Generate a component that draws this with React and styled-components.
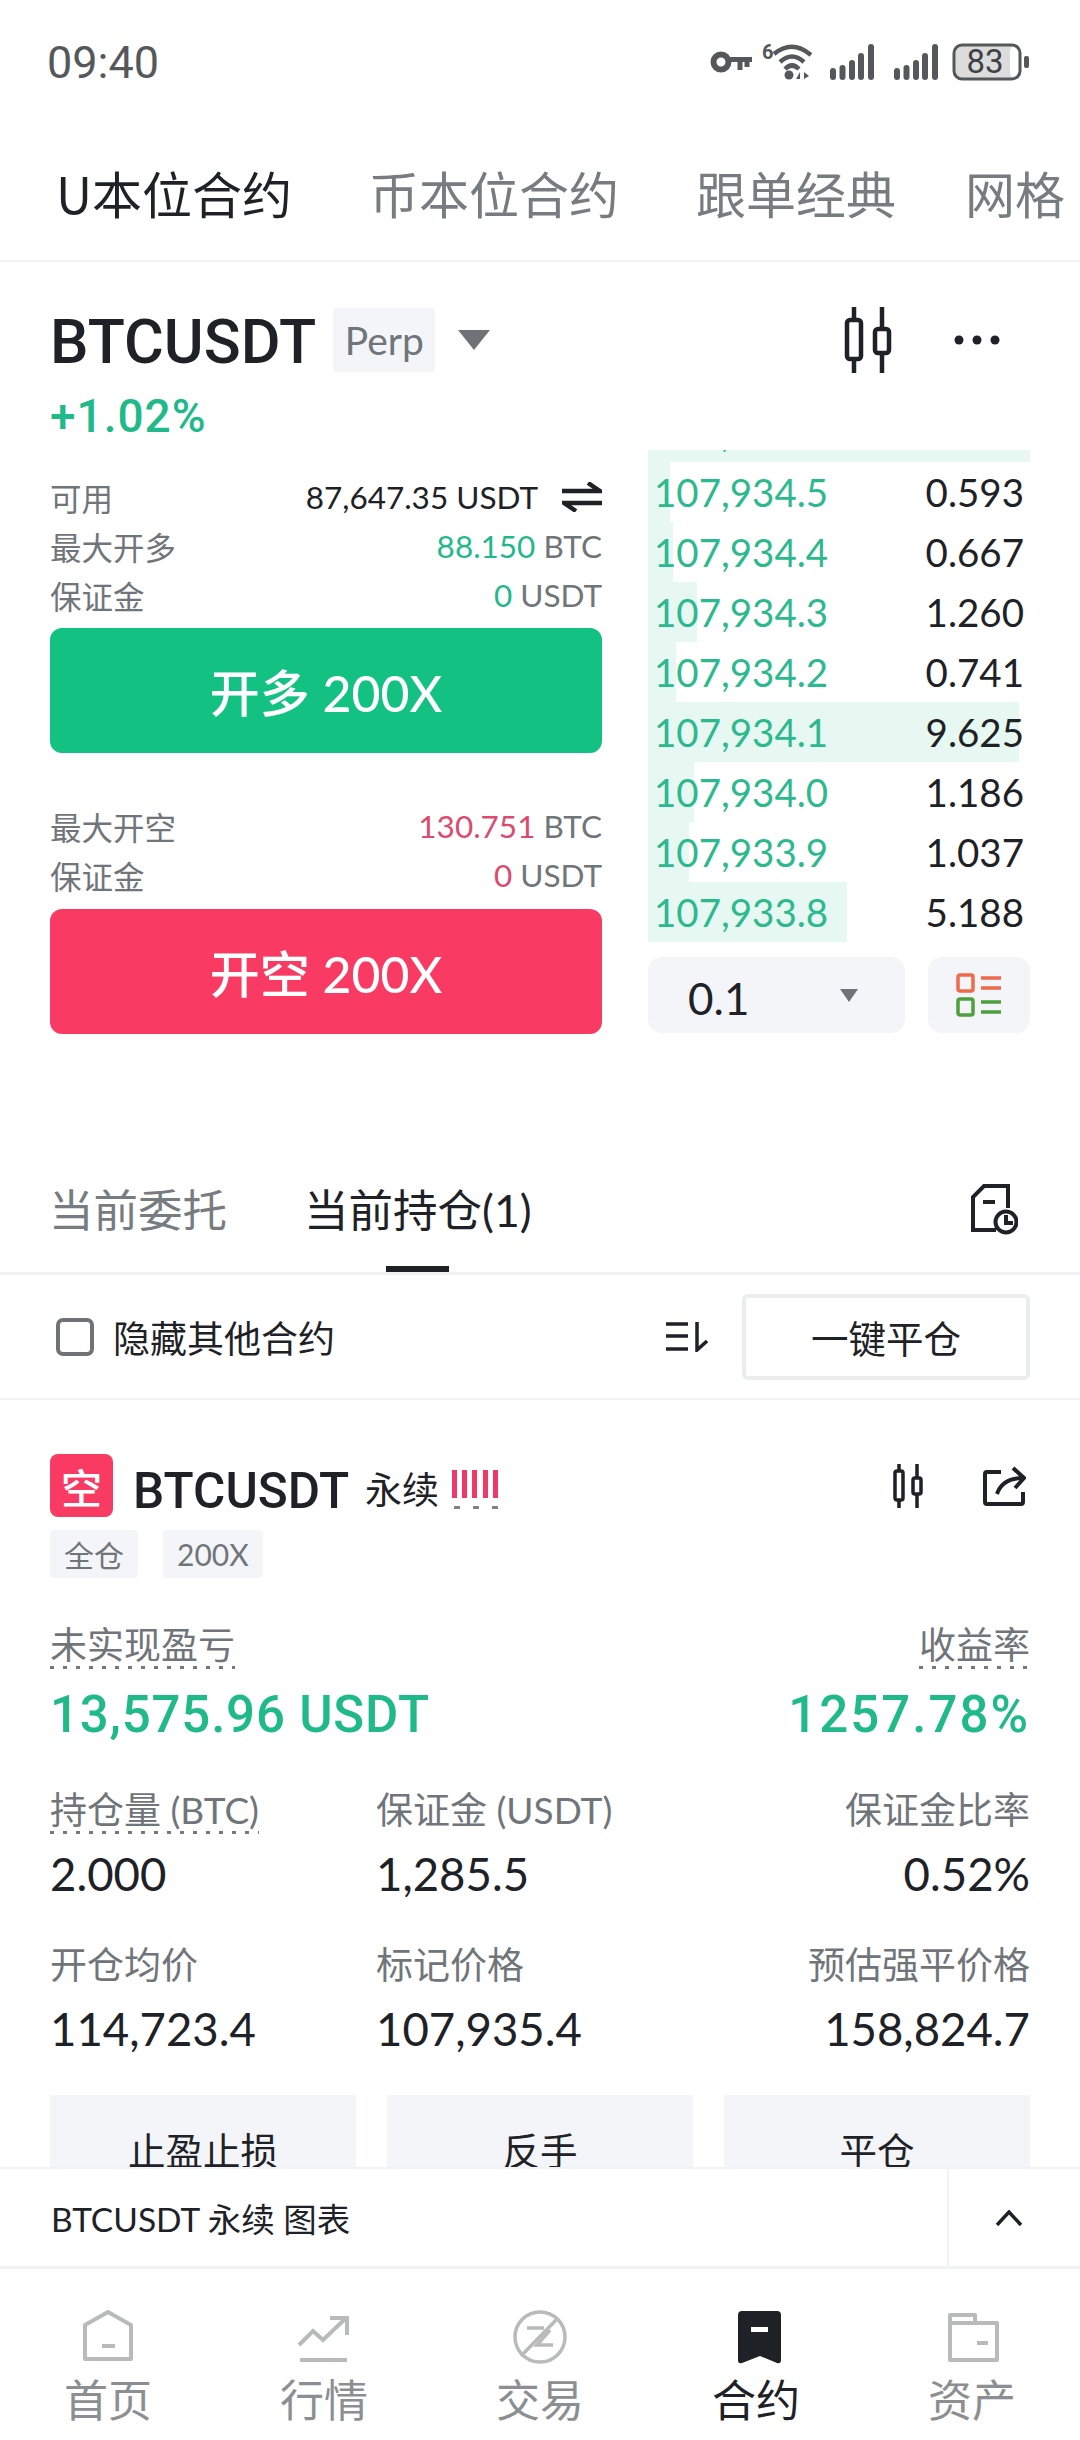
import React from 'react'
import styled, { createGlobalStyle } from 'styled-components'

const ink = '#1e2226'
const grey = '#70757a'
const green = '#1fb98a'
const red = '#dc4a6e'
const soft = '#f3f5f8'
const line = '#f1f2f4'

const GlobalStyle = createGlobalStyle`
  html, body {
    margin: 0;
    padding: 0;
    background: #fff;
  }
  body {
    font-family: Lato, "Noto Sans CJK SC", sans-serif;
    color: ${ink};
  }
`

const Page = styled.div`
  width: 1080px;
  height: 2440px;
  display: flex;
  flex-direction: column;
  overflow: hidden;
  background: #fff;
`

const StatusBar = styled.div`
  height: 124px;
  flex: none;
  display: flex;
  align-items: center;
  padding: 0 51px 0 47px;
  color: #55585a;
`

const Time = styled.span`
  font-family: Roboto, sans-serif;
  font-size: 45px;
  margin-right: auto;
`

const StatusIcon = styled.svg`
  display: block;
  flex: none;
  margin-left: ${props => props.$gap}px;
`

const TopTabs = styled.div`
  height: 136px;
  flex: none;
  display: flex;
  align-items: center;
  gap: 77px;
  padding-left: 56px;
  white-space: nowrap;
  overflow: hidden;
  border-bottom: 2px solid ${line};
`

const TopTab = styled.span`
  font-size: 50px;
  line-height: 60px;
  font-family: "Noto Sans CJK SC", sans-serif;
  margin-left: ${props => props.$shift || 0}px;
  color: ${props => (props.$active ? ink : '#777c80')};
`

const Scroller = styled.div`
  flex: 1;
  min-height: 0;
  overflow: hidden;
`

const Header = styled.div`
  display: flex;
  align-items: center;
  height: 64px;
  padding: 46px 80px 0 50px;
`

const Symbol = styled.span`
  margin-top: 4px;
  font-family: Roboto, sans-serif;
  font-weight: 500;
  font-size: 61px;
  line-height: 64px;
`

const PerpChip = styled.span`
  width: 102px;
  height: 64px;
  margin-left: 17px;
  display: flex;
  align-items: center;
  justify-content: center;
  background: ${soft};
  border-radius: 4px;
  color: ${grey};
  font-size: 39px;
`

const Caret = styled.i`
  display: block;
  border-style: solid;
  border-width: ${props => props.$h}px ${props => props.$w / 2}px 0;
  border-color: #6f7377 transparent transparent;
`

const HeaderCaret = styled(Caret)`
  margin: 0 auto 0 23px;
`

const HeaderActions = styled.div`
  display: flex;
  align-items: center;
  gap: 62px;
`

const Change = styled.div`
  margin: 19px 0 9px 50px;
  color: ${green};
  font-family: Roboto, sans-serif;
  font-weight: 500;
  font-size: 46px;
  letter-spacing: 1px;
  line-height: 50px;
`

const Trade = styled.div`
  display: grid;
  grid-template-columns: 552px 382px;
  column-gap: 46px;
  padding-left: 50px;
`

const OrderForm = styled.div`
  padding-top: 23px;
`

const SecondGroup = styled.div`
  margin-top: 49px;
`

const FormRow = styled.div`
  height: 47px;
  padding-bottom: 2px;
  display: flex;
  align-items: center;
  justify-content: space-between;
  font-size: 31.5px;
  color: ${grey};
`

const Value = styled.span`
  display: flex;
  align-items: center;
`

const SwapIcon = styled.svg`
  margin-left: 24px;
`

const Tone = styled.span`
  color: ${props => props.$color};
`

const TradeButton = styled.div`
  height: 125px;
  margin-top: ${props => props.$top}px;
  padding-bottom: 2px;
  box-sizing: border-box;
  display: flex;
  align-items: center;
  justify-content: center;
  border-radius: 12px;
  background: ${props => props.$color};
  color: #fff;
  font-size: 50px;
  font-weight: 500;
`

const Book = styled.div`
  overflow: hidden;
`

const BookRow = styled.div`
  height: 60px;
  display: flex;
  align-items: center;
  justify-content: space-between;
  padding: 0 6px 0 6px;
  font-size: 38.5px;
  line-height: 60px;
`

const ClippedRow = styled(BookRow)`
  margin-top: -48px;
  background: #e6f8f1;
`

const Price = styled.span`
  position: relative;
  color: #2cb98e;
`

const BookControls = styled.div`
  display: flex;
  justify-content: space-between;
  margin-top: 15px;
`

const Precision = styled.div`
  width: 257px;
  height: 76px;
  box-sizing: border-box;
  padding: 0 47px 0 40px;
  display: flex;
  align-items: center;
  justify-content: space-between;
  background: ${soft};
  border-radius: 14px;
  font-size: 44px;
`

const PrecisionValue = styled.span`
  margin-top: 6px;
`

const LayoutButton = styled.div`
  width: 102px;
  height: 76px;
  display: flex;
  align-items: center;
  justify-content: center;
  background: ${soft};
  border-radius: 14px;
`

const PositionTabs = styled.div`
  margin-top: 107px;
  height: 92px;
  display: flex;
  gap: 77px;
  padding: 39px 62px 0 49px;
  border-bottom: 3px solid ${line};
`

const PositionTab = styled.span`
  position: relative;
  height: 92px;
  font-size: 44.5px;
  line-height: 60px;
  color: ${props => (props.$active ? ink : '#777c80')};
  &::after {
    content: '';
    display: ${props => (props.$active ? 'block' : 'none')};
    position: absolute;
    left: 50%;
    bottom: 0;
    width: 63px;
    height: 6px;
    margin-left: -32px;
    background: ${ink};
  }
`

const HistoryIcon = styled.svg`
  margin: 4px 0 0 auto;
`

const FilterRow = styled.div`
  height: 123px;
  display: flex;
  align-items: center;
  padding: 0 50px 0 56px;
  border-bottom: 2px solid ${line};
`

const Checkbox = styled.i`
  display: block;
  width: 38px;
  height: 38px;
  box-sizing: border-box;
  border: 4px solid #6f7377;
  border-radius: 7px;
`

const FilterLabel = styled.span`
  margin: 0 auto 0 19px;
  font-size: 37px;
  color: ${ink};
`

const CloseAll = styled.div`
  width: 288px;
  height: 86px;
  margin-left: 34px;
  box-sizing: border-box;
  display: flex;
  align-items: center;
  justify-content: center;
  border: 4px solid #eaecee;
  border-radius: 6px;
  font-size: 37.5px;
`

const Card = styled.div`
  padding: 54px 50px 0 50px;
`

const CardTitle = styled.div`
  height: 63px;
  display: flex;
  align-items: center;
`

const SideBadge = styled.span`
  width: 63px;
  height: 63px;
  display: flex;
  align-items: center;
  justify-content: center;
  background: #f93b63;
  border-radius: 8px;
  color: #fff;
  font-size: 41px;
  font-weight: 500;
`

const CardSymbol = styled.span`
  margin: 10px 0 0 20px;
  font-family: Roboto, sans-serif;
  font-weight: 500;
  font-size: 49.5px;
`

const Perpetual = styled.span`
  margin: 4px 0 0 16px;
  font-size: 37px;
`

const LeverageBars = styled.svg`
  margin: 8px auto 0 13px;
`

const CardActions = styled.div`
  display: flex;
  align-items: center;
  gap: 60px;
  margin-right: 4px;
`

const Chips = styled.div`
  display: flex;
  gap: 25px;
  margin-top: 13px;
`

const Chip = styled.span`
  height: 48px;
  padding: 0 14px;
  display: flex;
  align-items: center;
  background: ${soft};
  border-radius: 4px;
  color: ${grey};
  font-size: 30px;
`

const PnlRow = styled.div`
  display: flex;
  justify-content: space-between;
  margin-top: ${props => props.$top}px;
`

const PnlColumn = styled.div`
  display: flex;
  flex-direction: column;
  align-items: ${props => (props.$right ? 'flex-end' : 'flex-start')};
`

const Label = styled.span`
  display: inline-block;
  height: 42px;
  padding-bottom: 3px;
  line-height: 42px;
  font-size: 37px;
  color: ${grey};
  white-space: nowrap;
  background: ${props =>
    props.$hint
      ? `repeating-linear-gradient(to right, #777 0 4px, transparent 4px 13px) left bottom / 100% 3px no-repeat`
      : 'none'};
`

const Pnl = styled.span`
  margin-top: 16px;
  font-family: Roboto, sans-serif;
  font-weight: 500;
  font-size: 51px;
  letter-spacing: ${props => props.$spacing}px;
  line-height: 60px;
  color: ${green};
`

const Metrics = styled.div`
  display: grid;
  grid-template-columns: 326px 1fr 1fr;
  margin-top: ${props => props.$top}px;
`

const Metric = styled.div`
  display: flex;
  flex-direction: column;
  align-items: ${props => (props.$right ? 'flex-end' : 'flex-start')};
`

const MetricValue = styled.span`
  margin-top: 12px;
  font-size: 45.5px;
  line-height: 56px;
`

const CardButtons = styled.div`
  display: grid;
  grid-template-columns: repeat(3, 1fr);
  column-gap: 31px;
  margin-top: 38px;
`

const CardButton = styled.div`
  height: 106px;
  padding-bottom: 10px;
  display: flex;
  align-items: center;
  justify-content: center;
  background: ${soft};
  font-size: 37.5px;
`

const ChartBar = styled.div`
  height: 97px;
  flex: none;
  display: flex;
  align-items: center;
  padding-left: 51px;
  font-size: 33.5px;
  background: #fff;
  border-top: 2px solid ${line};
  border-bottom: 3px solid ${line};
`

const ChartToggle = styled.div`
  width: 133px;
  height: 100%;
  box-sizing: border-box;
  padding-right: 12px;
  margin-left: auto;
  display: flex;
  align-items: center;
  justify-content: center;
  border-left: 2px solid ${line};
`

const BottomNav = styled.nav`
  height: 171px;
  flex: none;
  display: grid;
  grid-template-columns: repeat(5, 1fr);
  padding-top: 41px;
  box-sizing: border-box;
`

const NavItem = styled.div`
  display: flex;
  flex-direction: column;
  align-items: center;
  color: ${props => (props.$active ? ink : '#8c8f91')};
  font-size: 44px;
  line-height: 50px;
`

const NavIcon = styled.svg`
  display: block;
  margin-bottom: 11px;
`

const bookRows = [
  ['107,934.5', '0.593', 22],
  ['107,934.4', '0.667', 25],
  ['107,934.3', '1.260', 49],
  ['107,934.2', '0.741', 28],
  ['107,934.1', '9.625', 371],
  ['107,934.0', '1.186', 46],
  ['107,933.9', '1.037', 41],
  ['107,933.8', '5.188', 199],
]

const tabs = [
  { label: '首页', icon: HomeGlyph },
  { label: '行情', icon: MarketGlyph },
  { label: '交易', icon: TradeGlyph },
  { label: '合约', icon: FuturesGlyph, active: true },
  { label: '资产', icon: AssetsGlyph },
]

function HomeGlyph() {
  return (
    <g fill="none" stroke="#b8babb" strokeWidth="4" strokeLinejoin="round">
      <path d="M22 2 L45 15 V49 H-1 V15 Z" transform="translate(5 0)" />
      <path d="M21 36 H34" />
    </g>
  )
}

function MarketGlyph() {
  return (
    <g fill="none" stroke="#b8babb" strokeWidth="4">
      <path d="M2 35 L16 21 L26 30 L49 8" />
      <path d="M33 8 H50 V25" />
      <path d="M3 50 H50" />
    </g>
  )
}

function TradeGlyph() {
  return (
    <g fill="none" stroke="#b8babb" strokeWidth="3.5">
      <circle cx="27" cy="27" r="25" />
      <path d="M8 46 L45 8" />
      <path d="M14 18 H31" />
      <path d="M37 20 L24 35 H40" />
    </g>
  )
}

function FuturesGlyph() {
  return (
    <g>
      <path d="M9 1 H48 Q52 1 52 5 V50 Q52 54 48 53 L31 46 L13 53 Q9 54 9 50 V5 Q9 1 13 1 Z" fill={ink} />
      <rect x="22" y="17" width="17" height="5" fill="#fff" />
    </g>
  )
}

function AssetsGlyph() {
  return (
    <g fill="none" stroke="#b8babb" strokeWidth="4" strokeLinejoin="round">
      <path d="M5 5 H30 V13 H52 V50 H5 Z" />
      <path d="M5 13 H30" />
      <path d="M32 33 H43" />
    </g>
  )
}

const Candles = () => (
  <svg width="48" height="66" viewBox="0 0 48 66" fill="none" stroke={ink} strokeWidth="4.5">
    <path d="M10 0 V13 M10 52 V66 M38 0 V20 M38 46 V66" />
    <rect x="3" y="13" width="14" height="39" rx="3" />
    <rect x="31" y="22" width="14" height="24" rx="3" />
  </svg>
)

const Signal = ({ gap }) => (
  <StatusIcon $gap={gap} width="44" height="36" viewBox="0 0 44 36" fill="#55585a">
    <rect x="0" y="24" width="6" height="12" rx="3" />
    <rect x="9.5" y="21" width="6" height="15" rx="3" />
    <rect x="19" y="16" width="6" height="20" rx="3" />
    <rect x="28" y="9" width="6" height="27" rx="3" />
    <rect x="38" y="0" width="6" height="36" rx="3" />
  </StatusIcon>
)

export default function App() {
  return (
    <Page>
      <GlobalStyle />
      <StatusBar>
        <Time>09:40</Time>
        <StatusIcon $gap={0} width="42" height="24" viewBox="0 0 42 24" fill="none" stroke="#55585a">
          <circle cx="11" cy="12" r="7.5" strokeWidth="6" />
          <path d="M19 9.5 H42 M30 10 V20 M37 10 V17" strokeWidth="5" />
        </StatusIcon>
        <StatusIcon $gap={10} width="50" height="36" viewBox="0 0 50 36" fill="none" stroke="#55585a">
          <text x="0" y="15" fontFamily="Roboto, sans-serif" fontWeight="700" fontSize="20" fill="#55585a" stroke="none">6</text>
          <path d="M12 10 Q30 -5 49 11 M18 18 Q30 7 42 18 M23 25 Q30 18 37 25" strokeWidth="4.5" />
          <circle cx="27" cy="31" r="4.5" fill="#55585a" stroke="none" />
          <path d="M34 35 L38 28 V35 Z M42 28 L47 32 L42 35 Z" fill="#55585a" stroke="none" />
        </StatusIcon>
        <Signal gap={18} />
        <Signal gap={20} />
        <StatusIcon $gap={14} width="77" height="38" viewBox="0 0 77 38">
          <rect x="2" y="2" width="66" height="34" rx="8" fill="#dcdcdc" />
          <rect x="58" y="3" width="9" height="32" rx="6" fill="#fff" />
          <rect x="2" y="2" width="66" height="34" rx="8" fill="none" stroke="#55585a" strokeWidth="3" />
          <rect x="72" y="13" width="5" height="12" rx="2" fill="#55585a" />
          <text x="33" y="30" textAnchor="middle" fontFamily="Roboto, sans-serif" fontSize="33" fill="#3f4244">83</text>
        </StatusIcon>
      </StatusBar>

      <TopTabs>
        <TopTab $active>U本位合约</TopTab>
        <TopTab>币本位合约</TopTab>
        <TopTab>跟单经典</TopTab>
        <TopTab $shift={-8}>网格</TopTab>
      </TopTabs>

      <Scroller>
        <Header>
          <Symbol>BTCUSDT</Symbol>
          <PerpChip>Perp</PerpChip>
          <HeaderCaret $w={32} $h={20} />
          <HeaderActions>
            <Candles />
            <svg width="46" height="10" viewBox="0 0 46 10" fill={ink}>
              <circle cx="5" cy="5" r="4.5" />
              <circle cx="23" cy="5" r="4.5" />
              <circle cx="41" cy="5" r="4.5" />
            </svg>
          </HeaderActions>
        </Header>
        <Change>+1.02%</Change>

        <Trade>
          <OrderForm>
            <FormRow>
              <span>可用</span>
              <Value>
                <Tone $color={ink}>87,647.35 USDT</Tone>
                <SwapIcon width="40" height="30" viewBox="0 0 40 30" fill="none" stroke={ink} strokeWidth="4.5">
                  <path d="M0 9 H38 L26 1" />
                  <path d="M40 21 H2 L14 29" />
                </SwapIcon>
              </Value>
            </FormRow>
            <FormRow>
              <span>最大开多</span>
              <span><Tone $color={green}>88.150</Tone> BTC</span>
            </FormRow>
            <FormRow>
              <span>保证金</span>
              <span><Tone $color={green}>0</Tone> USDT</span>
            </FormRow>
            <TradeButton $color="#13c283" $top={8}>开多 200X</TradeButton>
            <SecondGroup>
              <FormRow>
                <span>最大开空</span>
                <span><Tone $color={red}>130.751</Tone> BTC</span>
              </FormRow>
              <FormRow>
                <span>保证金</span>
                <span><Tone $color={red}>0</Tone> USDT</span>
              </FormRow>
              <TradeButton $color="#f93b63" $top={9}>开空 200X</TradeButton>
            </SecondGroup>
          </OrderForm>

          <div>
            <Book>
              <ClippedRow>
                <Price>107,934.6</Price>
              </ClippedRow>
              {bookRows.map(([price, size, depth]) => (
                <BookRow
                  key={price}
                  style={{ background: `linear-gradient(to right, #e6f8f1 ${depth}px, #fff ${depth}px)` }}
                >
                  <Price>{price}</Price>
                  <span>{size}</span>
                </BookRow>
              ))}
            </Book>
            <BookControls>
              <Precision>
                <PrecisionValue>0.1</PrecisionValue>
                <Caret $w={19} $h={13} />
              </Precision>
              <LayoutButton>
                <svg width="46" height="44" viewBox="0 0 46 44" fill="none" strokeWidth="3.5">
                  <g stroke="#ef6a4a">
                    <rect x="2" y="2" width="15" height="16" rx="2" />
                    <path d="M25 5 H45 M25 15 H45" />
                  </g>
                  <g stroke="#4ea03c">
                    <rect x="2" y="26" width="15" height="16" rx="2" />
                    <path d="M25 29 H45 M25 39 H45" />
                  </g>
                </svg>
              </LayoutButton>
            </BookControls>
          </div>
        </Trade>

        <PositionTabs>
          <PositionTab>当前委托</PositionTab>
          <PositionTab $active>当前持仓(1)</PositionTab>
          <HistoryIcon width="48" height="52" viewBox="0 0 48 52" fill="none" stroke={ink} strokeWidth="4">
            <path d="M26 46 H3 V13 L14 2 H38 V24" />
            <path d="M13 18 H25" />
            <circle cx="36" cy="38" r="10.5" />
            <path d="M36 31 V39 H43" />
          </HistoryIcon>
        </PositionTabs>

        <FilterRow>
          <Checkbox />
          <FilterLabel>隐藏其他合约</FilterLabel>
          <svg width="42" height="30" viewBox="0 0 42 30" fill="none" stroke={ink} strokeWidth="3.5">
            <path d="M0 2 H22 M0 14 H22 M0 27 H22" />
            <path d="M31 0 V28 L41 19" />
          </svg>
          <CloseAll>一键平仓</CloseAll>
        </FilterRow>

        <Card>
          <CardTitle>
            <SideBadge>空</SideBadge>
            <CardSymbol>BTCUSDT</CardSymbol>
            <Perpetual>永续</Perpetual>
            <LeverageBars width="46" height="40" viewBox="0 0 46 40">
              <g fill="#f0386a">
                <rect x="0" y="0" width="5" height="28" />
                <rect x="10" y="0" width="5" height="28" />
                <rect x="20" y="0" width="5" height="28" />
                <rect x="31" y="0" width="5" height="28" />
                <rect x="41" y="0" width="5" height="28" />
              </g>
              <g fill="#808487">
                <rect x="2" y="36" width="6" height="3" />
                <rect x="21" y="36" width="6" height="3" />
                <rect x="40" y="36" width="6" height="3" />
              </g>
            </LeverageBars>
            <CardActions>
              <svg width="30" height="44" viewBox="0 0 30 44" fill="none" stroke={ink} strokeWidth="3.5">
                <path d="M6 0 V7 M6 36 V44 M24 0 V14 M24 30 V44" />
                <rect x="2" y="7" width="8" height="29" rx="2" />
                <rect x="20" y="14" width="8" height="16" rx="2" />
              </svg>
              <svg width="43" height="40" viewBox="0 0 43 40" fill="none" stroke={ink} strokeWidth="4">
                <path d="M18 6 H4 Q2 6 2 8 V36 Q2 38 4 38 H38 Q40 38 40 36 V26" />
                <path d="M14 28 Q19 13 38 12" />
                <path d="M30 2 L41 12 L32 22" />
              </svg>
            </CardActions>
          </CardTitle>
          <Chips>
            <Chip>全仓</Chip>
            <Chip>200X</Chip>
          </Chips>

          <PnlRow $top={46}>
            <PnlColumn>
              <Label $hint>未实现盈亏</Label>
              <Pnl $spacing={0.8}>13,575.96 USDT</Pnl>
            </PnlColumn>
            <PnlColumn $right>
              <Label $hint>收益率</Label>
              <Pnl $spacing={2}>1257.78%</Pnl>
            </PnlColumn>
          </PnlRow>

          <Metrics $top={44}>
            <Metric>
              <Label $hint>持仓量 (BTC)</Label>
              <MetricValue>2.000</MetricValue>
            </Metric>
            <Metric>
              <Label>保证金 (USDT)</Label>
              <MetricValue>1,285.5</MetricValue>
            </Metric>
            <Metric $right>
              <Label>保证金比率</Label>
              <MetricValue>0.52%</MetricValue>
            </Metric>
          </Metrics>

          <Metrics $top={42}>
            <Metric>
              <Label>开仓均价</Label>
              <MetricValue>114,723.4</MetricValue>
            </Metric>
            <Metric>
              <Label>标记价格</Label>
              <MetricValue>107,935.4</MetricValue>
            </Metric>
            <Metric $right>
              <Label>预估强平价格</Label>
              <MetricValue>158,824.7</MetricValue>
            </Metric>
          </Metrics>

          <CardButtons>
            <CardButton>止盈止损</CardButton>
            <CardButton>反手</CardButton>
            <CardButton>平仓</CardButton>
          </CardButtons>
        </Card>
      </Scroller>

      <ChartBar>
        BTCUSDT 永续 图表
        <ChartToggle>
          <svg width="28" height="16" viewBox="0 0 28 16" fill="none" stroke={ink} strokeWidth="3.5">
            <path d="M2 15 L14 2 L26 15" />
          </svg>
        </ChartToggle>
      </ChartBar>

      <BottomNav>
        {tabs.map(({ label, icon: Icon, active }) => (
          <NavItem key={label} $active={active}>
            <NavIcon width="54" height="54" viewBox="0 0 54 54">
              <Icon />
            </NavIcon>
            {label}
          </NavItem>
        ))}
      </BottomNav>
    </Page>
  )
}
